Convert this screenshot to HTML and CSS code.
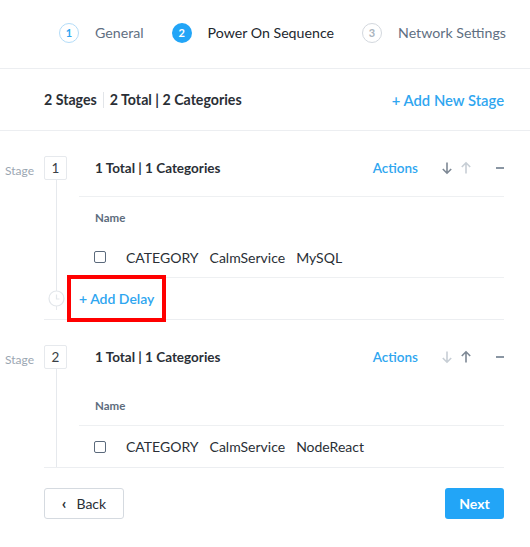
FILE: index.html
```html
<!DOCTYPE html>
<html>
<head>
<meta charset="utf-8">
<link rel="stylesheet" href="styles.css">
</head>
<body>
<div class="stepper">
  <div class="step step-done"><span class="step-num">1</span><span class="step-label">General</span></div>
  <div class="step step-active"><span class="step-num">2</span><span class="step-label">Power On Sequence</span></div>
  <div class="step step-todo"><span class="step-num">3</span><span class="step-label">Network Settings</span></div>
</div>

<div class="summary">
  <div class="summary-text"><span class="summary-stages">2 Stages</span><span class="summary-total">2 Total | 2 Categories</span></div>
  <a class="link">+ Add New Stage</a>
</div>

<div class="stage">
  <div class="stage-label">Stage</div>
  <div class="rail">
    <div class="stage-box">1</div>
    <div class="rail-line"></div>
  </div>
  <div class="stage-body">
    <div class="stage-head with-border">
      <span class="stage-title">1 Total | 1 Categories</span>
      <span class="stage-actions">
        <a class="link actions">Actions</a>
        <svg class="arrow" width="12" height="14" viewBox="0 0 12 14"><path d="M6 1.5V12M1.8 8L6 12.2 10.2 8" fill="none" stroke="#7d8894" stroke-width="1.6"/></svg>
        <svg class="arrow" width="12" height="14" viewBox="0 0 12 14"><path d="M6 12.5V2M1.8 6L6 1.8 10.2 6" fill="none" stroke="#c7ced5" stroke-width="1.6"/></svg>
        <span class="minus"></span>
      </span>
    </div>
    <div class="col-head">Name</div>
    <div class="item-row with-border">
      <span class="checkbox"></span>
      <span class="cell">CATEGORY</span><span class="cell">CalmService</span><span class="cell">MySQL</span>
    </div>
  </div>
  <div class="rail-cell">
    <div class="rail-line short"></div>
    <svg class="clock" width="17" height="17" viewBox="0 0 17 17"><circle cx="8.5" cy="8.5" r="7.5" fill="#fff" stroke="#e3e7eb" stroke-width="1.2"/><path d="M8.5 4.5V9H11.5" fill="none" stroke="#e3e7eb" stroke-width="1.2"/></svg>
  </div>
  <div class="delay-cell">
    <a class="link">+ Add Delay</a>
    <div class="highlight"></div>
  </div>
  <div class="stage-rule"></div>
</div>

<div class="stage">
  <div class="stage-label">Stage</div>
  <div class="rail">
    <div class="stage-box">2</div>
    <div class="rail-line"></div>
  </div>
  <div class="stage-body">
    <div class="stage-head">
      <span class="stage-title">1 Total | 1 Categories</span>
      <span class="stage-actions">
        <a class="link actions">Actions</a>
        <svg class="arrow" width="12" height="14" viewBox="0 0 12 14"><path d="M6 1.5V12M1.8 8L6 12.2 10.2 8" fill="none" stroke="#c7ced5" stroke-width="1.6"/></svg>
        <svg class="arrow" width="12" height="14" viewBox="0 0 12 14"><path d="M6 12.5V2M1.8 6L6 1.8 10.2 6" fill="none" stroke="#7d8894" stroke-width="1.6"/></svg>
        <span class="minus"></span>
      </span>
    </div>
    <div class="col-head with-border">Name</div>
    <div class="item-row">
      <span class="checkbox"></span>
      <span class="cell">CATEGORY</span><span class="cell">CalmService</span><span class="cell">NodeReact</span>
    </div>
  </div>
  <div class="stage-rule"></div>
</div>

<div class="footer">
  <button class="btn btn-back"><span class="chev">&#8249;</span>Back</button>
  <button class="btn btn-next">Next</button>
</div>
</body>
</html>
```

FILE: styles.css
```css
* { box-sizing: border-box; }
html, body { margin: 0; padding: 0; background: #fff; }
body {
  font-family: Lato, "Noto Sans", sans-serif;
  color: #22272e;
  font-size: 13px;
  width: 530px;
}
.link { color: #2fa6f0; font-weight: 600; cursor: pointer; }

.stepper {
  height: 69px;
  border-bottom: 1px solid #eceef1;
  display: flex;
  align-items: center;
  justify-content: flex-end;
  padding-right: 24px;
  padding-bottom: 3px;
}
.step { display: flex; align-items: center; margin-left: 28px; font-size: 14.2px; }
.step-num {
  width: 20px; height: 20px; border-radius: 50%;
  display: flex; align-items: center; justify-content: center;
  font-size: 11px; font-weight: 700; margin-right: 16px;
}
.step-done .step-num { border: 1px solid #b3dcf8; color: #2fa6f0; }
.step-done .step-label { color: #5f6f82; }
.step-active .step-num { background: #22a5f7; color: #fff; }
.step-active .step-label { color: #22272e; }
.step-todo .step-num { border: 1px solid #d3d8de; color: #aab3bd; }
.step-todo .step-label { color: #5f6f82; }

.summary {
  height: 62px;
  border-bottom: 1px solid #eceef1;
  display: flex;
  align-items: center;
  justify-content: space-between;
  padding: 0 26px 0 44px;
  font-size: 14.2px;
}
.summary-text { font-weight: 700; color: #2a2f36; display: flex; align-items: center; }
.summary-stages { padding-right: 6px; border-right: 1px solid #e2e5e9; margin-right: 6px; line-height: 16px; }
.summary .link { font-size: 14.8px; }

.stage {
  display: grid;
  grid-template-columns: 44px 35px 1fr;
  margin-right: 26px;
  padding-top: 25px;
}
.stage-label {
  font-size: 12px; color: #9ba6b2;
  text-align: right; padding-right: 10px; padding-top: 7px;
}
.rail { display: flex; flex-direction: column; }
.stage-box {
  width: 23px; height: 24px;
  border: 1px solid #e6e9ed; border-radius: 2px;
  display: flex; align-items: center; justify-content: center;
  font-size: 13.5px; color: #3a3f46;
}
.rail-line { flex: 1; width: 1px; background: #e6e9ed; margin-left: 12px; }
.stage-body { display: flex; flex-direction: column; }
.stage-head {
  height: 40px;
  padding: 0 0 16px 16px;
  display: flex; align-items: center; justify-content: space-between;
}
.with-border { border-bottom: 1px solid #eef0f2; }
.stage-head.with-border { height: 41px; }
.stage-title { font-weight: 700; font-size: 13.5px; color: #2a2f36; }
.stage-actions { display: flex; align-items: center; }
.actions { font-size: 13.5px; margin-right: 23px; }
.arrow { margin-right: 7px; }
.minus { width: 8px; height: 2px; background: #8a96a3; margin-left: 17px; }
.col-head {
  height: 40px; padding-left: 16px;
  display: flex; align-items: center;
  font-size: 11.5px; font-weight: 700; color: #5d6c7d;
}
.col-head.with-border { height: 41px; }
.item-row {
  height: 41px; padding-left: 15px;
  display: flex; align-items: center;
  font-size: 14px; color: #2a2f36;
}
.checkbox {
  width: 12px; height: 12px;
  border: 1.3px solid #5b6a7c; border-radius: 2px;
  margin-right: 20px;
}
.cell { margin-right: 11px; }
.rail-cell {
  grid-column: 2;
  position: relative;
  display: flex; align-items: center;
}
.rail-line.short { position: absolute; left: 0; top: 0; bottom: 9px; }
.clock { position: relative; margin-left: 4px; }
.delay-cell {
  grid-column: 3;
  height: 41px;
  display: flex; align-items: center;
  position: relative;
  font-size: 14px;
}
.highlight {
  position: absolute;
  left: -12px; top: -3px;
  width: 99px; height: 47px;
  border: 4px solid #ff0000;
}
.stage-rule { grid-column: 2 / 4; height: 1px; background: #eceef1; }

.footer {
  display: flex; justify-content: space-between;
  padding: 20px 26px 0 44px;
}
.btn {
  height: 31px; border-radius: 3px;
  font-family: Lato, "Noto Sans", sans-serif;
  font-size: 14px;
  display: flex; align-items: center; justify-content: center;
}
.btn-back {
  width: 80px; background: #fff;
  border: 1px solid #d5dae0; color: #2a2f36;
}
.chev { font-size: 16px; font-weight: 700; margin-right: 10px; margin-top: -2px; }
.btn-next {
  width: 59px; background: #22a5f7; border: none;
  color: #fff; font-weight: 700;
}
```
